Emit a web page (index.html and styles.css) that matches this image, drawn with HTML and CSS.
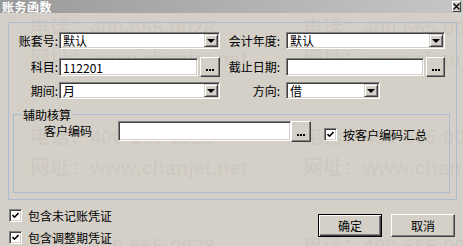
FILE: index.html
```html
<!DOCTYPE html>
<html lang="zh-CN">
<head>
    <meta charset="UTF-8">
    <title>账务函数</title>
    <link rel="stylesheet" href="styles.css">
</head>
<body>
    <div class="dialog">
        <!-- водяной знак -->
        <div class="watermark">
            <div class="wm-line"><span>电话：400-665-0028</span><span>电话：400-665-0028</span></div>
            <div class="wm-line wm-gap"><span>网址：www.chanjet.net</span><span>网址：www.chanjet.net</span></div>
            <div class="wm-line"><span>电话：400-665-0028</span><span>电话：400-665-0028</span></div>
            <div class="wm-line wm-gap"><span>网址：www.chanjet.net</span><span>网址：www.chanjet.net</span></div>
            <div class="wm-line"><span>电话：400-665-0028</span><span>电话：400-665-0028</span></div>
        </div>

        <div class="titlebar">
            <span class="title">账务函数</span>
            <span class="close">
                <svg width="7" height="7" viewBox="0 0 7 7"><path d="M0.5 0.5L6.5 6.5M6.5 0.5L0.5 6.5" stroke="#000" stroke-width="1.3"/></svg>
            </span>
        </div>

        <div class="content">
            <div class="frame">
                <div class="row row1">
                    <label class="lbl">账套号:</label>
                    <div class="select col1"><span class="val">默认</span><span class="arrow"><i></i></span></div>
                    <label class="lbl2">会计年度:</label>
                    <div class="select col2"><span class="val">默认</span><span class="arrow"><i></i></span></div>
                </div>
                <div class="row row2">
                    <label class="lbl">科目:</label>
                    <div class="field col1">
                        <div class="input"><span class="val">112201</span></div>
                        <div class="more"><b></b><b></b><b></b></div>
                    </div>
                    <label class="lbl2">截止日期:</label>
                    <div class="field col2">
                        <div class="input"><span class="val"></span></div>
                        <div class="more"><b></b><b></b><b></b></div>
                    </div>
                </div>
                <div class="row row3">
                    <label class="lbl">期间:</label>
                    <div class="select col1"><span class="val">月</span><span class="arrow"><i></i></span></div>
                    <label class="lbl2">方向:</label>
                    <div class="select dir"><span class="val">借</span><span class="arrow"><i></i></span></div>
                </div>

                <fieldset class="group">
                    <legend>辅助核算</legend>
                    <div class="group-row">
                        <label class="cust-lbl">客户编码</label>
                        <div class="input cust"><span class="val"></span></div>
                        <div class="more tall"><b></b><b></b><b></b></div>
                        <div class="check sum">
                            <span class="box"><svg width="7" height="7" viewBox="0 0 7 7"><path d="M0.5 3L2.5 5.2L6.5 1" fill="none" stroke="#000" stroke-width="1.6"/></svg></span>
                            <span>按客户编码汇总</span>
                        </div>
                    </div>
                </fieldset>
            </div>

            <div class="footer">
                <div class="checks">
                    <div class="check">
                        <span class="box"><svg width="7" height="7" viewBox="0 0 7 7"><path d="M0.5 3L2.5 5.2L6.5 1" fill="none" stroke="#000" stroke-width="1.6"/></svg></span>
                        <span>包含未记账凭证</span>
                    </div>
                    <div class="check">
                        <span class="box"><svg width="7" height="7" viewBox="0 0 7 7"><path d="M0.5 3L2.5 5.2L6.5 1" fill="none" stroke="#000" stroke-width="1.6"/></svg></span>
                        <span>包含调整期凭证</span>
                    </div>
                </div>
                <div class="buttons">
                    <button class="btn default">确定</button>
                    <button class="btn">取消</button>
                </div>
            </div>
        </div>
    </div>
</body>
</html>
```

FILE: styles.css
```css
* {
    box-sizing: border-box;
}

body {
    margin: 0;
    width: 463px;
    height: 246px;
    overflow: hidden;
    background: #d4d0c8;
    font-family: "Noto Sans CJK SC", "Liberation Sans", sans-serif;
    font-size: 12px;
    color: #000;
}

.dialog {
    position: relative;
    height: 246px;
}

.watermark {
    position: absolute;
    top: 0;
    left: 0;
    right: 0;
    bottom: 0;
    padding: 16px 0 0 30px;
    pointer-events: none;
    color: rgba(0,0,0,0.04);
    font: bold 20px/24px "Liberation Sans", "Noto Sans CJK SC", sans-serif;
    white-space: nowrap;
}

.wm-line {
    display: flex;
    margin-bottom: 7px;
}

.wm-line span {
    width: 273px;
    flex: none;
}

.wm-line.wm-gap {
    margin-bottom: 54px;
}

.titlebar {
    position: relative;
    height: 13px;
    background: linear-gradient(to right, #9a9a9a, #c6c6c6);
    display: flex;
    justify-content: space-between;
    align-items: flex-start;
    padding: 0 2px;
}

.title {
    color: #fff;
    font-weight: bold;
    font-size: 12px;
    line-height: 13px;
    letter-spacing: 0.5px;
}

.close {
    width: 9px;
    height: 11px;
    margin-top: 1px;
    background: #d4d0c8;
    border: 1px solid;
    border-color: #fff #404040 #404040 #fff;
    display: flex;
    align-items: center;
    justify-content: center;
}

.content {
    position: relative;
}

.frame {
    margin: 9px 6px 0 8px;
    height: 178px;
    border: 1px solid #adbbd3;
}

.row {
    display: flex;
    align-items: center;
    height: 17px;
}

.row1 {
    margin-top: 9px;
}

.row2 {
    margin-top: 9px;
    height: 18px;
}

.row3 {
    margin-top: 6px;
}

.lbl {
    width: 50px;
    text-align: right;
    padding-right: 1px;
    line-height: 14px;
}

.lbl2 {
    width: 66px;
    text-align: right;
    padding-right: 6px;
    line-height: 14px;
}

.col1 {
    width: 161px;
}

.col2 {
    width: 159px;
}

.dir {
    width: 94px;
}

.select, .input {
    display: flex;
    align-items: center;
    height: 17px;
    background: #fff;
    border: 1px solid;
    border-color: #808080 #fff #fff #808080;
    box-shadow: inset 1px 1px #404040, inset -1px -1px #d4d0c8;
    padding: 1px;
}

.val {
    flex: 1;
    padding-left: 2px;
    line-height: 13px;
    white-space: nowrap;
}

.arrow {
    width: 14px;
    height: 13px;
    background: #d4d0c8;
    border: 1px solid;
    border-color: #d4d0c8 #404040 #404040 #d4d0c8;
    box-shadow: inset 1px 1px #fff, inset -1px -1px #808080;
    display: flex;
    align-items: center;
    justify-content: center;
}

.arrow i {
    width: 0;
    height: 0;
    border-left: 4px solid transparent;
    border-right: 4px solid transparent;
    border-top: 4px solid #000;
    margin-top: 1px;
}

.field {
    display: flex;
    align-items: center;
    gap: 2px;
}

.field .input {
    flex: 1;
    height: 18px;
}

.more {
    width: 20px;
    height: 20px;
    flex: none;
    background: #d4d0c8;
    border: 1px solid;
    border-color: #fff #404040 #404040 #fff;
    box-shadow: inset -1px -1px #808080;
    display: flex;
    justify-content: center;
    align-items: flex-end;
    gap: 1px;
    padding-bottom: 5px;
}

.more b {
    width: 2px;
    height: 2px;
    background: #000;
}

.col2 .more {
    width: 19px;
}

.group {
    margin: 9px 6px 0 4px;
    padding: 0;
    height: 85px;
    border: 1px solid #adbbd3;
}

.group legend {
    margin-left: 7px;
    padding: 0 2px;
    line-height: 13px;
}

.group-row {
    display: flex;
    align-items: flex-start;
    padding-left: 30px;
}

.cust-lbl {
    width: 74px;
    line-height: 20px;
}

.input.cust {
    width: 173px;
    height: 20px;
}

.more.tall {
    width: 20px;
    height: 21px;
    margin-left: 0;
}

.check {
    display: flex;
    align-items: center;
    gap: 6px;
    height: 13px;
    line-height: 13px;
}

.check.sum {
    margin-left: 13px;
    margin-top: 7px;
}

.box {
    width: 13px;
    height: 13px;
    flex: none;
    background: #fff;
    border: 1px solid;
    border-color: #808080 #fff #fff #808080;
    box-shadow: inset 1px 1px #404040, inset -1px -1px #d4d0c8;
    display: flex;
    align-items: center;
    justify-content: center;
}

.footer {
    display: flex;
    justify-content: space-between;
    padding: 0 8px 0 9px;
}

.checks {
    display: flex;
    flex-direction: column;
    gap: 9px;
    margin-top: 9px;
}

.buttons {
    display: flex;
    gap: 9px;
    margin-top: 14px;
}

.btn {
    width: 64px;
    height: 23px;
    padding: 0;
    background: #d4d0c8;
    border: 1px solid;
    border-color: #fff #404040 #404040 #fff;
    box-shadow: inset -1px -1px #808080;
    font-family: "Noto Sans CJK SC", "Liberation Sans", sans-serif;
    font-size: 12px;
    color: #000;
}

.btn.default {
    border-color: #000;
    box-shadow: inset 1px 1px #fff, inset -1px -1px #404040, inset -2px -2px #808080;
}
```
